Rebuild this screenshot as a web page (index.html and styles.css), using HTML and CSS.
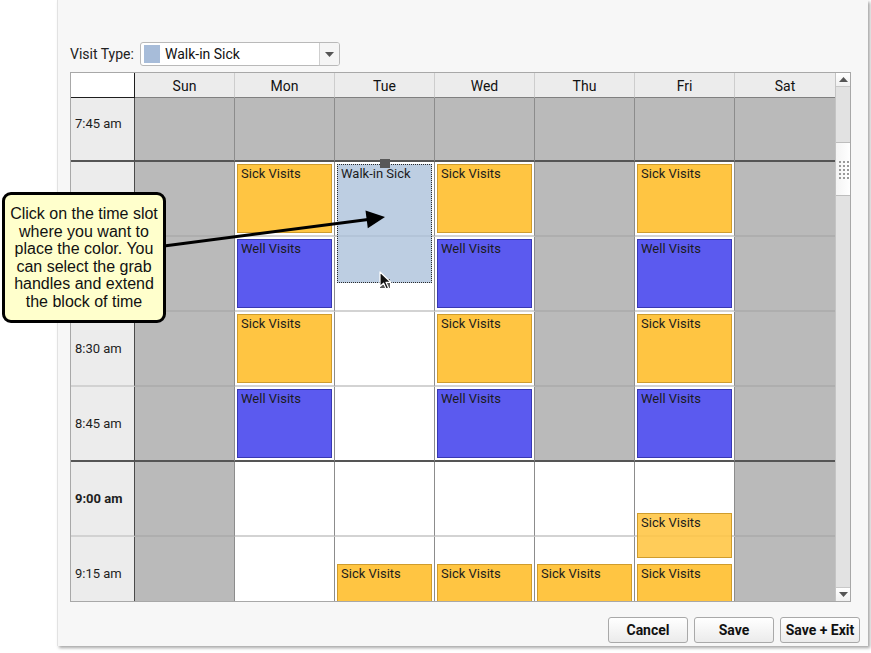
FILE: index.html
```html
<!DOCTYPE html>
<html lang="en">
<head>
<meta charset="utf-8">
<title>Visit Type Schedule</title>
<link rel="stylesheet" href="styles.css">
</head>
<body>
<div class="panel">
  <div class="toolbar">
    <span class="lbl">Visit Type:</span>
    <div class="select">
      <span class="swatch"></span>
      <span class="sel-text">Walk-in Sick</span>
      <span class="sel-btn"><svg width="9" height="5" viewBox="0 0 9 5"><path d="M0 0H9L4.5 5Z" fill="#555"/></svg></span>
    </div>
  </div>
  <div class="frame">
    <div class="cal">
      <div class="head">
        <div class="hcorner"></div>
        <div class="hday">Sun</div>
        <div class="hday">Mon</div>
        <div class="hday">Tue</div>
        <div class="hday">Wed</div>
        <div class="hday">Thu</div>
        <div class="hday">Fri</div>
        <div class="hday last">Sat</div>
      </div>
      <div class="viewport">
        <div class="rows">
          <!-- 7:45 -->
          <div class="time hr">7:45 am</div>
          <div class="cell g hr"></div>
          <div class="cell g hr"></div>
          <div class="cell g hr"></div>
          <div class="cell g hr"></div>
          <div class="cell g hr"></div>
          <div class="cell g hr"></div>
          <div class="cell g hr last"></div>
          <!-- 8:00 -->
          <div class="time">8:00 am</div>
          <div class="cell g"></div>
          <div class="cell w"><div class="ev sick">Sick Visits</div></div>
          <div class="cell w anchor">
            <div class="walkin">Walk-in Sick<span class="handle top"></span><span class="handle bottom"></span></div>
          </div>
          <div class="cell w"><div class="ev sick">Sick Visits</div></div>
          <div class="cell g"></div>
          <div class="cell w"><div class="ev sick">Sick Visits</div></div>
          <div class="cell g last"></div>
          <!-- 8:15 -->
          <div class="time">8:15 am</div>
          <div class="cell g"></div>
          <div class="cell w"><div class="ev well">Well Visits</div></div>
          <div class="cell w"></div>
          <div class="cell w"><div class="ev well">Well Visits</div></div>
          <div class="cell g"></div>
          <div class="cell w"><div class="ev well">Well Visits</div></div>
          <div class="cell g last"></div>
          <!-- 8:30 -->
          <div class="time">8:30 am</div>
          <div class="cell g"></div>
          <div class="cell w"><div class="ev sick">Sick Visits</div></div>
          <div class="cell w"></div>
          <div class="cell w"><div class="ev sick">Sick Visits</div></div>
          <div class="cell g"></div>
          <div class="cell w"><div class="ev sick">Sick Visits</div></div>
          <div class="cell g last"></div>
          <!-- 8:45 -->
          <div class="time hr">8:45 am</div>
          <div class="cell g hr"></div>
          <div class="cell w hr"><div class="ev well">Well Visits</div></div>
          <div class="cell w hr"></div>
          <div class="cell w hr"><div class="ev well">Well Visits</div></div>
          <div class="cell g hr"></div>
          <div class="cell w hr"><div class="ev well">Well Visits</div></div>
          <div class="cell g hr last"></div>
          <!-- 9:00 -->
          <div class="time bold">9:00 am</div>
          <div class="cell g"></div>
          <div class="cell w"></div>
          <div class="cell w"></div>
          <div class="cell w"></div>
          <div class="cell w"></div>
          <div class="cell w anchor"><div class="ev sick overlay">Sick Visits</div></div>
          <div class="cell g last"></div>
          <!-- 9:15 -->
          <div class="time">9:15 am</div>
          <div class="cell g"></div>
          <div class="cell w"></div>
          <div class="cell w"><div class="ev sick late">Sick Visits</div></div>
          <div class="cell w"><div class="ev sick late">Sick Visits</div></div>
          <div class="cell w"><div class="ev sick late">Sick Visits</div></div>
          <div class="cell w"><div class="ev sick late">Sick Visits</div></div>
          <div class="cell g last"></div>
        </div>
      </div>
    </div>
    <div class="scrollbar">
      <div class="sb-btn"><svg width="9" height="5" viewBox="0 0 9 5"><path d="M0 5H9L4.5 0Z" fill="#555"/></svg></div>
      <div class="sb-track"><div class="sb-thumb"><div class="grip"></div></div></div>
      <div class="sb-btn"><svg width="9" height="5" viewBox="0 0 9 5"><path d="M0 0H9L4.5 5Z" fill="#555"/></svg></div>
    </div>
  </div>
  <div class="actions">
    <button class="btn">Cancel</button>
    <button class="btn">Save</button>
    <button class="btn">Save + Exit</button>
  </div>
</div>

<div class="callout">Click on the time slot<br>where you want to<br>place the color. You<br>can select the grab<br>handles and extend<br>the block of time</div>

<svg class="arrow" width="871" height="653" viewBox="0 0 871 653">
  <line x1="164" y1="246" x2="368" y2="219.5" stroke="#000" stroke-width="3"/>
  <path d="M385 217 L365.5 210.5 L367.8 228.2 Z" fill="#000"/>
</svg>

<svg class="cursor" width="14" height="20" viewBox="0 0 14 20">
  <path d="M1 1 L1 15.5 L4.6 12.2 L7.2 18 L9.6 17 L7 11.3 L11.8 11.3 Z" fill="#111" stroke="#fff" stroke-width="1.2" stroke-linejoin="round"/>
</svg>
</body>
</html>
```

FILE: styles.css
```css
* {
  box-sizing: border-box;
}

html, body {
  margin: 0;
  padding: 0;
  background: #ffffff;
}

body {
  position: relative;
  width: 871px;
  height: 653px;
  overflow: hidden;
  font-family: Roboto, "Liberation Sans", sans-serif;
  color: #1b1b1b;
}

.panel {
  margin-left: 57px;
  width: 811px;
  height: 646px;
  background: #f7f7f7;
  border-left: 1px solid #e2e2e2;
  box-shadow: 2px 2px 3px rgba(0, 0, 0, 0.35);
  padding: 42px 8px 0 12px;
  display: flex;
  flex-direction: column;
}

/* toolbar */
.toolbar {
  display: flex;
  align-items: center;
  height: 24px;
}

.lbl {
  width: 70px;
  font-size: 14px;
  color: #222;
}

.select {
  width: 200px;
  height: 24px;
  background: #fff;
  border: 1px solid #b9b9b9;
  border-radius: 3px;
  display: flex;
  align-items: center;
  padding-left: 3px;
}

.swatch {
  width: 16px;
  height: 18px;
  background: #a7bcd9;
}

.sel-text {
  flex: 1;
  margin-left: 5px;
  font-size: 14px;
  color: #111;
}

.sel-btn {
  width: 20px;
  height: 22px;
  border-left: 1px solid #cfcfcf;
  background: #f5f5f5;
  border-radius: 0 2px 2px 0;
  display: flex;
  align-items: center;
  justify-content: center;
}

/* calendar frame */
.frame {
  margin-top: 6px;
  width: 781px;
  height: 530px;
  border: 1px solid #a8a8a8;
  display: flex;
  background: #fff;
}

.cal {
  flex: 1;
  display: flex;
  flex-direction: column;
  min-width: 0;
}

.head {
  display: grid;
  grid-template-columns: 64px repeat(7, 1fr);
  height: 25px;
  flex: none;
}

.hcorner {
  background: #fff;
  border-right: 1px solid #1e1e1e;
  border-bottom: 1px solid #1e1e1e;
}

.hday {
  background: #ececec;
  border-right: 1px solid #cdcdcd;
  border-bottom: 1px solid #808080;
  display: flex;
  align-items: center;
  justify-content: center;
  padding-top: 2px;
  font-size: 14px;
  color: #111;
}

.hday.last {
  border-right: none;
}

.viewport {
  flex: 1;
  overflow: hidden;
}

.rows {
  margin-top: -11px;
  display: grid;
  grid-template-columns: 64px repeat(7, 1fr);
  grid-auto-rows: 75px;
}

.time {
  background: #ececec;
  border-right: 1px solid #4a4a4a;
  border-bottom: 2px solid #d2d2d2;
  display: flex;
  align-items: center;
  padding-left: 4px;
  font-size: 13px;
  color: #1e1e1e;
}

.time.bold {
  font-weight: 700;
}

.cell {
  border-right: 1px solid #8c8c8c;
  border-bottom: 2px solid #d3d3d3;
  padding: 2px;
}

.cell.last {
  border-right: none;
}

.cell.g {
  background: #bababa;
  border-bottom-color: #aeaeae;
}

.cell.w {
  background: #ffffff;
}

.time.hr,
.cell.hr {
  border-bottom-color: #555555;
}

.anchor {
  position: relative;
}

/* events */
.ev {
  height: 100%;
  border: 1px solid;
  padding: 1px 3px;
  font-size: 13px;
  line-height: 16px;
  color: #1c1c1c;
}

.ev.sick {
  background: #ffc542;
  border-color: #cf9c2c;
}

.ev.well {
  background: #5b5aef;
  border-color: #3838b3;
}

.ev.late {
  margin-top: 25px;
  height: 70px;
}

.ev.overlay {
  position: absolute;
  left: 2px;
  right: 2px;
  top: 51px;
  height: 45px;
  z-index: 2;
  background: rgba(255, 197, 66, 0.88);
}

.walkin {
  position: absolute;
  left: 2px;
  right: 2px;
  top: 2px;
  height: 119px;
  z-index: 3;
  background: rgba(170, 192, 218, 0.78);
  border: 1px dotted #2a2a2a;
  padding: 1px 3px;
  font-size: 13px;
  line-height: 16px;
  color: #1c1c1c;
}

.handle {
  position: absolute;
  left: 42px;
  width: 10px;
  height: 9px;
  background: #585858;
}

.handle.top {
  top: -6px;
}

.handle.bottom {
  bottom: -6px;
}

/* scrollbar */
.scrollbar {
  width: 15px;
  border-left: 1px solid #c4c4c4;
  background: #e2e2e2;
  display: flex;
  flex-direction: column;
}

.sb-btn {
  height: 14px;
  background: linear-gradient(#ffffff, #f0f0f0);
  border-bottom: 1px solid #c8c8c8;
  display: flex;
  align-items: center;
  justify-content: center;
  flex: none;
}

.sb-btn:last-child {
  border-bottom: none;
  border-top: 1px solid #c8c8c8;
}

.sb-track {
  flex: 1;
}

.sb-thumb {
  margin-top: 55px;
  height: 54px;
  background: linear-gradient(90deg, #f4f4f4, #ffffff);
  border-top: 1px solid #bdbdbd;
  border-bottom: 1px solid #bdbdbd;
  display: flex;
  align-items: center;
  justify-content: center;
}

.grip {
  width: 11px;
  height: 19px;
  background-image: radial-gradient(circle, #9a9a9a 0.9px, transparent 1.1px);
  background-size: 4px 4px;
}

/* actions */
.actions {
  margin-top: 15px;
  display: flex;
  justify-content: flex-end;
  gap: 6px;
  padding-right: 0;
}

.btn {
  width: 80px;
  height: 26px;
  border: 1px solid #a9a9a9;
  border-radius: 3px;
  background: linear-gradient(#ffffff, #ebebeb);
  font-family: Roboto, "Liberation Sans", sans-serif;
  font-size: 14px;
  font-weight: 700;
  color: #111;
  padding: 0;
}

/* overlays */
.callout {
  position: absolute;
  left: 2px;
  top: 192px;
  width: 164px;
  height: 131px;
  background: #ffffcc;
  border: 3px solid #000;
  border-radius: 9px;
  display: flex;
  align-items: center;
  justify-content: center;
  text-align: center;
  font-family: "Liberation Sans", Arial, sans-serif;
  font-size: 16px;
  line-height: 17.5px;
  color: #111;
  z-index: 10;
}

.arrow {
  position: absolute;
  left: 0;
  top: 0;
  z-index: 9;
  pointer-events: none;
}

.cursor {
  position: absolute;
  left: 379px;
  top: 271px;
  z-index: 11;
}
```
